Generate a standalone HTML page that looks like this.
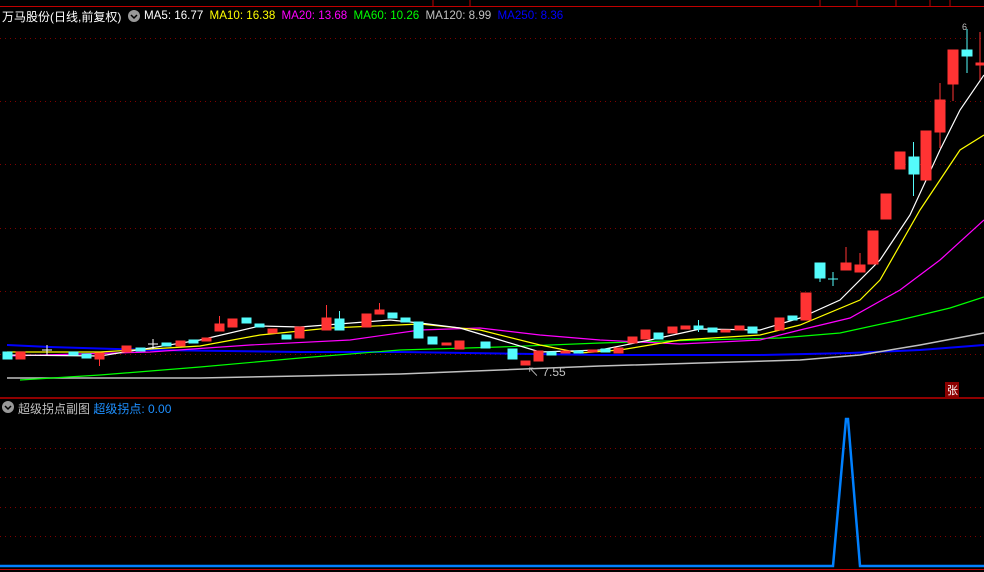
<!DOCTYPE html>
<html><head><meta charset="utf-8"><style>
html,body{margin:0;padding:0;background:#000;width:984px;height:572px;overflow:hidden;font-family:"Liberation Sans","Noto Sans CJK SC",sans-serif}
.t{position:absolute;font-size:12px;white-space:nowrap}
.m span{margin-left:3px}
</style></head><body>
<svg width="984" height="572" style="position:absolute;left:0;top:0" xmlns="http://www.w3.org/2000/svg">
<rect x="0" y="0" width="984" height="7" fill="#000"/>
<line x1="0" y1="6.5" x2="984" y2="6.5" stroke="#c00000"/>
<g stroke="#c00000"><line x1="433" y1="0" x2="433" y2="6"/><line x1="470" y1="0" x2="470" y2="6"/><line x1="820" y1="0" x2="820" y2="6"/><line x1="857" y1="0" x2="857" y2="6"/><line x1="896" y1="0" x2="896" y2="6"/><line x1="930" y1="0" x2="930" y2="6"/><line x1="950" y1="0" x2="950" y2="6"/></g>
<g stroke="#800000" stroke-dasharray="1 4">
<line x1="0" y1="38.5" x2="984" y2="38.5"/><line x1="0" y1="101.5" x2="984" y2="101.5"/><line x1="0" y1="164.5" x2="984" y2="164.5"/><line x1="0" y1="228.5" x2="984" y2="228.5"/><line x1="0" y1="291.5" x2="984" y2="291.5"/><line x1="0" y1="354.5" x2="984" y2="354.5"/>
<line x1="0" y1="448.5" x2="984" y2="448.5"/><line x1="0" y1="477.5" x2="984" y2="477.5"/><line x1="0" y1="507.5" x2="984" y2="507.5"/><line x1="0" y1="536.5" x2="984" y2="536.5"/>
</g>
<line x1="0" y1="398" x2="984" y2="398" stroke="#c00000" stroke-width="1.5"/>
<line x1="0" y1="569.5" x2="984" y2="569.5" stroke="#c00000"/>
<g fill="none" stroke-width="1.2">
<polyline stroke="#0000ff" stroke-width="2" points="7,345 50,347 150,350 300,352 400,352 600,355 760,355 850,353 920,350 984,345"/>
<polyline stroke="#c0c0c0" stroke-width="1.5" points="7,378 200,378 300,376 400,374 500,370 600,366 700,363 800,360 860,355 920,345 984,333"/>
<polyline stroke="#00ff00" points="20,380 100,375 200,367 300,358 400,350 500,347 600,343 700,340 780,338 840,333 900,320 950,308 984,297"/>
<polyline stroke="#ff00ff" points="7,356 150,352 250,345 350,340 420,330 480,328 540,335 600,340 680,344 760,340 800,330 850,318 900,290 940,260 984,220"/>
<polyline stroke="#ffff00" points="7,352 100,352 200,346 260,335 330,328 420,324 480,330 540,345 580,353 620,350 680,340 760,335 800,325 860,300 880,280 920,210 960,150 984,135"/>
<polyline stroke="#ffffff" points="7,355 100,356 200,340 260,326 300,327 390,320 420,323 460,328 500,340 540,352 600,350 650,340 700,329 760,330 800,318 840,300 880,260 910,215 940,150 960,110 984,75"/>
</g>
<g>
<g fill="#54fcfc" stroke="#54fcfc">
<rect x="3" y="352" width="9" height="7"/><rect x="69" y="352" width="9" height="3"/><rect x="82" y="354" width="9" height="4"/><rect x="136" y="348" width="9" height="3"/><rect x="162" y="343" width="9" height="3"/><rect x="189" y="340" width="9" height="3"/><rect x="242" y="318" width="9" height="5"/><rect x="255" y="324" width="9" height="3"/><rect x="282" y="335" width="9" height="4"/><rect x="335" y="319" width="9" height="11"/><line x1="339.5" y1="311" x2="339.5" y2="319"/><rect x="388" y="313" width="9" height="5"/><rect x="401" y="318" width="9" height="4"/><rect x="414" y="322" width="9" height="16"/><rect x="428" y="337" width="9" height="7"/><rect x="481" y="342" width="9" height="6"/><rect x="508" y="349" width="9" height="10"/><rect x="547" y="352" width="9" height="3"/><rect x="574" y="351" width="9" height="2"/><rect x="601" y="349" width="9" height="3"/><rect x="654" y="333" width="9" height="6"/><rect x="694" y="326" width="9" height="3"/><line x1="698.5" y1="320" x2="698.5" y2="332"/><rect x="708" y="328" width="9" height="4"/><rect x="748" y="327" width="9" height="6"/><rect x="788" y="316" width="9" height="4"/><rect x="815" y="263" width="10" height="15"/><line x1="820" y1="278" x2="820" y2="282"/><line x1="828" y1="279" x2="838" y2="279"/><line x1="833" y1="272" x2="833" y2="286"/><rect x="909" y="157" width="10" height="17"/><line x1="913.5" y1="142" x2="913.5" y2="196"/><rect x="962" y="50" width="10" height="6"/><line x1="967" y1="29" x2="967" y2="73"/>
</g>
<g fill="#ff3333" stroke="#ff3333">
<rect x="16" y="352" width="9" height="7"/><rect x="95" y="353" width="9" height="6"/><line x1="99.5" y1="359" x2="99.5" y2="366"/><rect x="122" y="346" width="9" height="6"/><rect x="176" y="341" width="9" height="5"/><rect x="202" y="338" width="9" height="3"/><rect x="215" y="324" width="9" height="7"/><line x1="219.5" y1="316" x2="219.5" y2="324"/><rect x="228" y="319" width="9" height="8"/><rect x="268" y="329" width="9" height="4"/><rect x="295" y="327" width="9" height="11"/><rect x="322" y="318" width="9" height="12"/><line x1="326.5" y1="305" x2="326.5" y2="318"/><rect x="362" y="314" width="9" height="13"/><rect x="375" y="310" width="9" height="4"/><line x1="379.5" y1="303" x2="379.5" y2="310"/><rect x="442" y="343" width="9" height="2"/><rect x="455" y="341" width="9" height="8"/><rect x="521" y="361" width="9" height="4"/><rect x="534" y="351" width="9" height="10"/><rect x="561" y="351" width="9" height="2"/><rect x="588" y="350" width="9" height="2"/><rect x="614" y="348" width="9" height="5"/><rect x="628" y="337" width="9" height="6"/><rect x="641" y="330" width="9" height="9"/><rect x="668" y="327" width="9" height="6"/><rect x="681" y="326" width="9" height="3"/><rect x="721" y="330" width="9" height="2"/><rect x="735" y="326" width="9" height="4"/><rect x="775" y="318" width="9" height="12"/><rect x="801" y="293" width="10" height="27"/><rect x="841" y="263" width="10" height="7"/><line x1="846" y1="247" x2="846" y2="263"/><rect x="855" y="265" width="10" height="7"/><line x1="860" y1="253" x2="860" y2="265"/><rect x="868" y="231" width="10" height="33"/><rect x="881" y="194" width="10" height="25"/><rect x="895" y="152" width="10" height="17"/><rect x="921" y="131" width="10" height="49"/><rect x="935" y="100" width="10" height="32"/><line x1="940" y1="83" x2="940" y2="148"/><rect x="948" y="50" width="10" height="34"/><line x1="953" y1="84" x2="953" y2="101"/><rect x="976" y="63" width="8" height="2"/><line x1="980" y1="32" x2="980" y2="80"/>
</g>
<g stroke="#fff"><line x1="42" y1="350" x2="52" y2="350"/><line x1="47" y1="345" x2="47" y2="355"/><line x1="148" y1="344" x2="158" y2="344"/><line x1="153" y1="339" x2="153" y2="349"/></g>
</g>
<polyline fill="none" stroke="#0080ff" stroke-width="2.5" points="0,566 833,566 846,419 848,419 860,566 984,566"/>
<rect x="945" y="382" width="14" height="15" fill="#8b0000"/>
</svg>
<div class="t" style="left:947px;top:382px;color:#fff;font-size:11px">张</div>
<div class="t" style="left:527px;top:363px;color:#c0c0c0;font-size:12px">↖ 7.55</div>
<div class="t" style="left:962px;top:22px;color:#c0c0c0;font-size:9px">6</div>
<div class="t" style="left:2px;top:8px;color:#fff;font-size:12px">万马股份(日线,前复权)</div>
<svg style="position:absolute;left:128px;top:10px" width="12" height="12"><circle cx="6" cy="6" r="6" fill="#999"/><path d="M3 5 L6 8 L9 5" stroke="#000" stroke-width="1.5" fill="none"/></svg>
<div class="t m" style="left:141px;top:9px;font-size:11.6px"><span style="color:#fff">MA5: 16.77</span> <span style="color:#ffff00">MA10: 16.38</span> <span style="color:#ff00ff">MA20: 13.68</span> <span style="color:#00ff00">MA60: 10.26</span> <span style="color:#c0c0c0">MA120: 8.99</span> <span style="color:#0000ff">MA250: 8.36</span></div>
<svg style="position:absolute;left:2px;top:401px" width="12" height="12"><circle cx="6" cy="6" r="6" fill="#999"/><path d="M3 5 L6 8 L9 5" stroke="#000" stroke-width="1.5" fill="none"/></svg>
<div class="t" style="left:18px;top:400px;color:#c0c0c0;font-size:12px">超级拐点副图 <span style="color:#1e90ff;font-size:12px">超级拐点: 0.00</span></div>
</body></html>
